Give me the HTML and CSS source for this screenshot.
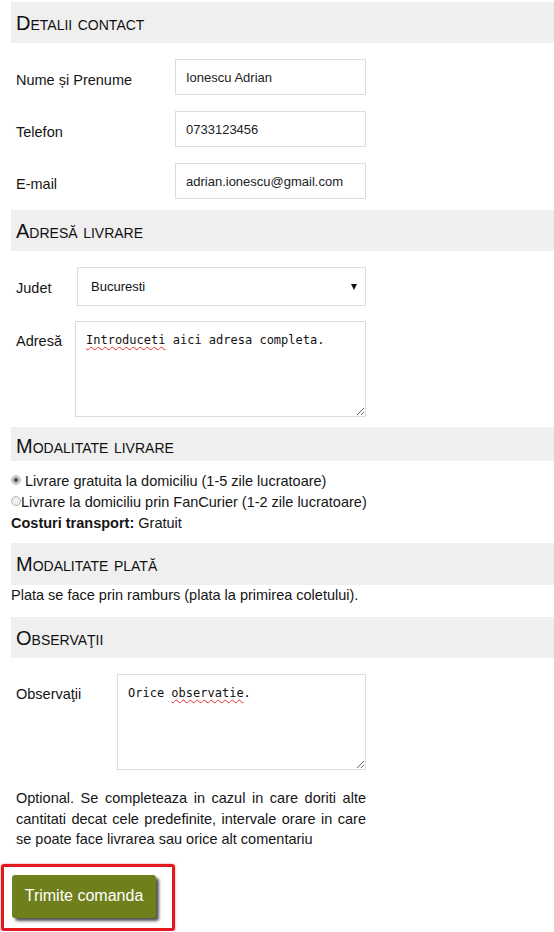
FILE: index.html
```html
<!DOCTYPE html>
<html>
    <head>
        <title>Comanda</title>
        <meta charset="utf-8">
        <link rel="stylesheet" href="styles.css">
    </head>

    <body>
        <p class="section-title">Detalii contact</p>

        <div class="contact-row first-row">
            <label class="field-label">Nume și Prenume</label>
            <input class="text-input" type="text" value="Ionescu Adrian">
        </div>
        <div class="contact-row">
            <label class="field-label">Telefon</label>
            <input class="text-input" type="text" value="0733123456">
        </div>
        <div class="contact-row">
            <label class="field-label">E-mail</label>
            <input class="text-input" type="text" value="adrian.ionescu@gmail.com">
        </div>

        <p class="section-title">Adresă livrare</p>

        <div class="judet-row">
            <label class="field-label judet-label">Judet</label>
            <span class="select-wrap">
                <select class="judet-select">
                    <option>Bucuresti</option>
                    <option>Cluj</option>
                    <option>Iasi</option>
                </select>
            </span>
        </div>
        <div class="adresa-row">
            <label class="field-label area-label">Adresă</label>
            <div class="text-area adresa-area" contenteditable="true"><span class="typo">Introduceti</span> aici adresa completa.</div>
        </div>

        <p class="section-title short-title">Modalitate livrare</p>

        <div class="livrare-options">
            <label><input class="radio" type="radio" name="livrare" checked> Livrare gratuita la domiciliu (1-5 zile lucratoare)</label><br>
            <label><input class="radio" type="radio" name="livrare">Livrare la domiciliu prin FanCurier (1-2 zile lucratoare)</label><br>
            <b>Costuri transport:</b> Gratuit
        </div>

        <p class="section-title plata-title">Modalitate plată</p>

        <p class="plata-text">Plata se face prin ramburs (plata la primirea coletului).</p>

        <p class="section-title">Observaţii</p>

        <div class="obs-row">
            <label class="field-label area-label">Observaţii</label>
            <div class="text-area obs-area" contenteditable="true">Orice <span class="typo">observatie</span>.</div>
        </div>

        <p class="obs-help">Optional. Se completeaza in cazul in care doriti alte cantitati decat cele predefinite, intervale orare in care se poate face livrarea sau orice alt comentariu</p>

        <div class="submit-box">
            <button class="submit-button">Trimite comanda</button>
        </div>
    </body>
</html>
```

FILE: styles.css
```css
body{
    margin:0;
    padding:2px 0 0 11px;
    font-family:"Liberation Sans", Arial, sans-serif;
    font-size:14.5px;
    color:#151515;
    background-color:white;
}

.section-title{
    margin:11px 0 0 0;
    padding:10px 5px 9px 5px;
    background-color:#efefef;
    font-size:20px;
    line-height:22px;
    font-variant:small-caps;
    color:#111;
}
body > .section-title:first-child{
    margin-top:0;
}
.short-title{
    margin-top:10px;
    padding-top:8px;
    padding-bottom:4px;
}
.plata-title{
    margin-top:9px;
    padding-bottom:10px;
}

.field-label{
    font-size:14.5px;
    color:#151515;
}

/* contact */
.contact-row{
    display:grid;
    grid-template-columns:159px 191px;
    align-items:center;
    padding-left:5px;
    margin-top:16px;
}
.contact-row .field-label{
    padding-top:5px;
}
.text-input{
    box-sizing:border-box;
    width:191px;
    height:36px;
    border:1px solid #dcdcdc;
    padding:0 10px;
    font-family:"Liberation Sans", Arial, sans-serif;
    font-size:13px;
    color:#222;
    outline:none;
}

/* adresa */
.judet-row{
    display:grid;
    grid-template-columns:61px 289px;
    align-items:center;
    padding-left:5px;
    margin-top:16px;
}
.judet-label{
    padding-top:3px;
}
.select-wrap{
    position:relative;
    display:block;
}
.select-wrap::after{
    content:"";
    position:absolute;
    right:9px;
    top:17px;
    border-left:3.5px solid transparent;
    border-right:3.5px solid transparent;
    border-top:6px solid #111;
}
.judet-select{
    appearance:none;
    -webkit-appearance:none;
    box-sizing:border-box;
    width:289px;
    height:39px;
    border:1px solid #dcdcdc;
    border-radius:0;
    background-color:white;
    padding:0 13px;
    font-family:"Liberation Sans", Arial, sans-serif;
    font-size:13px;
    color:#111;
    outline:none;
}

.adresa-row{
    display:grid;
    grid-template-columns:59px 291px;
    align-items:start;
    padding-left:5px;
    margin-top:15px;
}
.area-label{
    padding-top:12px;
}
.text-area{
    box-sizing:border-box;
    height:96px;
    border:1px solid #dcdcdc;
    padding:10px 10px;
    font-family:"DejaVu Sans Mono", "Liberation Mono", monospace;
    font-size:12px;
    line-height:16px;
    color:#111;
    resize:both;
    overflow:auto;
    outline:none;
}
.adresa-area{
    width:291px;
}
.typo{
    text-decoration:underline wavy #e03030;
    text-decoration-thickness:1px;
    text-underline-offset:2px;
}

/* livrare */
.livrare-options{
    margin-top:10px;
    line-height:21px;
}
.radio{
    appearance:none;
    -webkit-appearance:none;
    box-sizing:border-box;
    width:10px;
    height:10px;
    margin:0;
    border:1px solid #b8b8b8;
    border-radius:50%;
    background:radial-gradient(circle, #f7f7f7 0%, #e4e4e4 100%);
    vertical-align:1px;
}
.radio:checked{
    background:radial-gradient(circle, #555 0, #666 2px, #d8d8d8 3px, #ececec 100%);
}

.plata-text{
    margin:0;
    line-height:21px;
}

/* observatii */
.obs-row{
    display:grid;
    grid-template-columns:101px 249px;
    align-items:start;
    padding-left:5px;
    margin-top:16px;
}
.obs-area{
    width:249px;
}
.obs-help{
    width:350px;
    margin:18px 0 0 5px;
    line-height:20.5px;
    text-align:justify;
}

.submit-box{
    display:inline-block;
    margin:14px 0 0 -10px;
    padding:8px 16px 10px 8px;
    border:3px solid #e3171e;
    border-radius:3px;
    box-shadow:0 0 2px rgba(227, 23, 30, 0.6);
}
.submit-button{
    width:144px;
    height:43px;
    background-color:#6f7f1b;
    border:none;
    border-radius:3px;
    color:white;
    font-family:"Liberation Sans", Arial, sans-serif;
    font-size:16px;
    cursor:pointer;
    box-shadow:3px 3px 3px #555;
}
.submit-button:hover{
    background-color:#5f6d15;
}
```
